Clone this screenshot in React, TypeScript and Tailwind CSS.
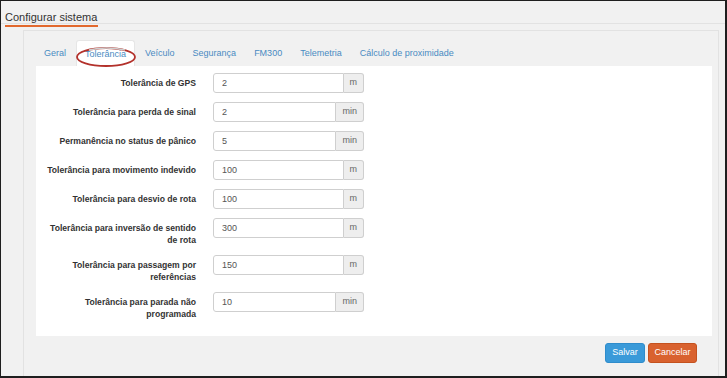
import React from 'react'

const tabs = ['Geral', 'Tolerância', 'Veículo', 'Segurança', 'FM300', 'Telemetria', 'Cálculo de proximidade']

interface Field {
  label: string
  value: string
  unit: string
}

const fields: Field[] = [
  { label: 'Tolerância de GPS', value: '2', unit: 'm' },
  { label: 'Tolerância para perda de sinal', value: '2', unit: 'min' },
  { label: 'Permanência no status de pânico', value: '5', unit: 'min' },
  { label: 'Tolerância para movimento indevido', value: '100', unit: 'm' },
  { label: 'Tolerância para desvio de rota', value: '100', unit: 'm' },
  { label: 'Tolerância para inversão de sentido de rota', value: '300', unit: 'm' },
  { label: 'Tolerância para passagem por referências', value: '150', unit: 'm' },
  { label: 'Tolerância para parada não programada', value: '10', unit: 'min' },
]

function FieldRow({ field }: { field: Field }) {
  return (
    <div className="flex items-start mb-[9px]">
      <label className="w-[156px] shrink-0 text-right font-bold text-[8.6px] leading-[12px] pt-[4px] text-[#333]">
        {field.label}
      </label>
      <div className="ml-[17px] flex w-[151px] h-[20px]">
        <input
          readOnly
          value={field.value}
          className="flex-1 min-w-0 h-full border border-[#cfcfcf] rounded-l-[3px] pl-[8px] text-[9px] text-[#555] bg-white outline-none"
        />
        <span className="h-full flex items-center px-[6px] border border-l-0 border-[#cfcfcf] rounded-r-[3px] bg-[#eeeeee] text-[9px] text-[#666]">
          {field.unit}
        </span>
      </div>
    </div>
  )
}

export default function App() {
  return (
    <div
      className="w-[727px] h-[378px] flex flex-col bg-[#f1f1f1] border-l border-t border-r-2 border-b-2 border-[#1e1e1e] overflow-hidden"
      style={{ fontFamily: '"Liberation Sans", Arial, sans-serif' }}
    >
      <div className="h-[23px] shrink-0 border-b border-[#e2e2e2] px-[4px] pt-[3px]">
        <span className="inline-block text-[11px] leading-[13px] text-[#333] border-b-2 border-[#e2692e] pr-[1px] pb-[1px]">
          Configurar sistema
        </span>
      </div>

      <div className="relative flex-1 ml-[22px] mr-[6px] mt-[6px] border-l border-t border-r border-[#e2e2e2] pl-[12px] pr-[6px] pt-[9px]">
        <div className="flex h-[26px] items-stretch">
          {tabs.map((t, i) => (
            <div
              key={t}
              className={`flex items-center pt-[2px] px-[8px] mr-[2px] text-[9px] text-[#4a8bc2] rounded-t-[3px] ${
                i === 1 ? 'bg-white border border-b-0 border-[#e6e6e6]' : ''
              }`}
            >
              {t}
            </div>
          ))}
        </div>

        <svg className="absolute left-[51px] top-[13px]" width="62" height="24" viewBox="0 0 62 24">
          <ellipse cx="31" cy="13" rx="29" ry="9" fill="none" stroke="#b3312b" strokeWidth="1.8" />
          <path d="M14 6 Q31 2 50 6" fill="none" stroke="#cfcfcf" strokeWidth="1.5" />
        </svg>

        <div className="bg-white pl-[4px] pt-[7px] pb-[7px]">
          {fields.map(f => (
            <FieldRow key={f.label} field={f} />
          ))}
        </div>

        <div className="flex justify-end gap-[3px] mt-[7px] pr-[15px]">
          <button className="h-[20px] w-[40px] rounded-[3px] bg-[#3a9ad9] border border-[#2f8ccb] text-white text-[9px]">
            Salvar
          </button>
          <button className="h-[20px] w-[49px] rounded-[3px] bg-[#d9622f] border border-[#c4521f] text-white text-[9px]">
            Cancelar
          </button>
        </div>
      </div>
    </div>
  )
}
